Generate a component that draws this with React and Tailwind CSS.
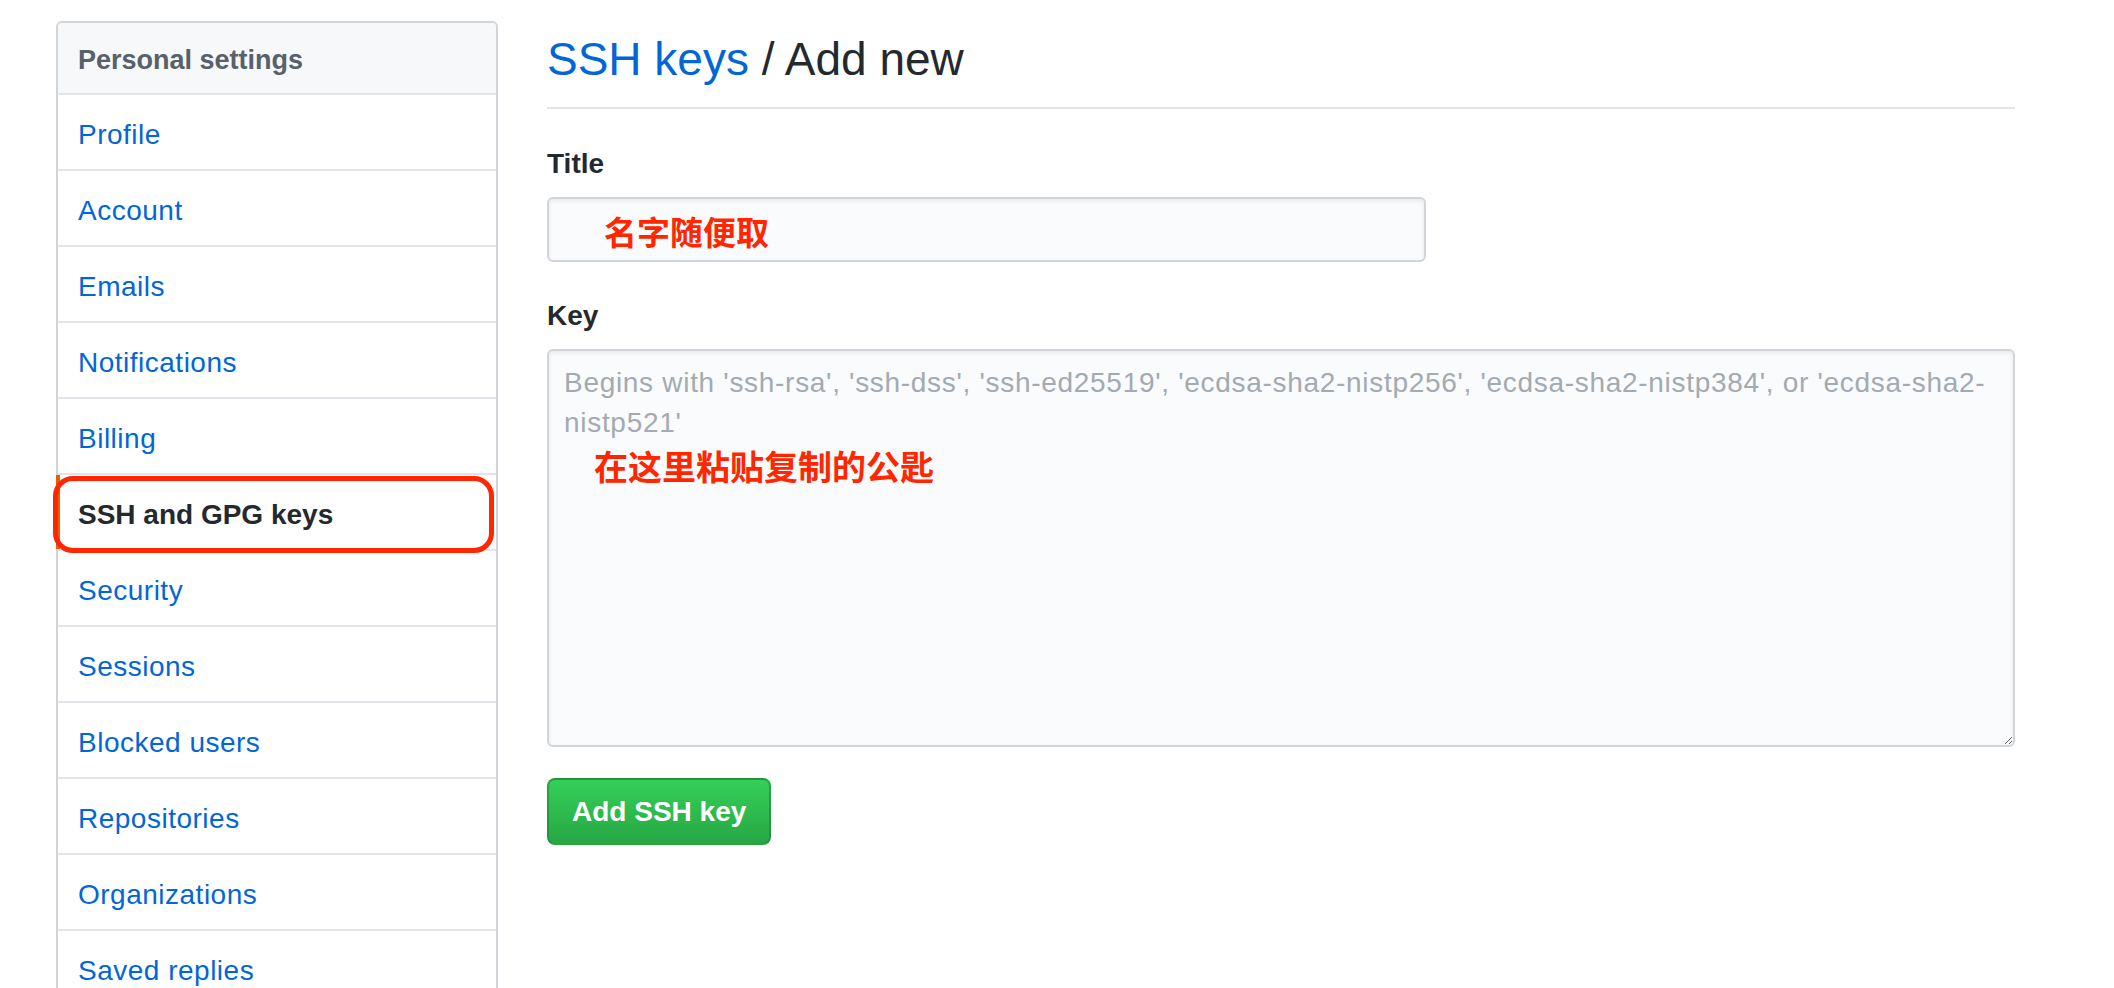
import React from 'react';

const menuItems = [
  'Profile',
  'Account',
  'Emails',
  'Notifications',
  'Billing',
  'SSH and GPG keys',
  'Security',
  'Sessions',
  'Blocked users',
  'Repositories',
  'Organizations',
  'Saved replies',
];

const Sidebar = () => (
  <nav className="w-[442px] shrink-0 self-start border-2 border-[#d1d5da] rounded-t-[6px]">
    <div className="h-[72px] leading-[70px] pt-[2px] pl-[20px] bg-[#f6f8fa] border-b-2 border-[#e1e4e8] rounded-t-[4px] text-[27px] font-bold text-[#586069]">
      Personal settings
    </div>
    {menuItems.map((item) => {
      const selected = item === 'SSH and GPG keys';
      return (
        <div
          key={item}
          className={`relative h-[76px] leading-[69px] pt-[5px] pl-[20px] text-[28px] border-b-2 border-[#e1e4e8] last:border-b-0 ${
            selected ? 'font-bold text-[#24292e]' : 'text-[#0366d6] tracking-[0.5px]'
          }`}
        >
          {selected && (
            <>
              <span className="absolute left-[-2px] top-0 bottom-0 w-[4px] bg-[#e36209]" />
              {/* red annotation around the current item */}
              <span className="absolute left-[-5px] right-[2px] top-[1px] bottom-[-4px] border-[5px] border-[#ff2600] rounded-[20px]" />
            </>
          )}
          <span className="relative">{item}</span>
        </div>
      );
    })}
  </nav>
);

export default function App() {
  return (
    <div className="min-h-screen bg-white font-['Liberation_Sans','Noto_Sans_CJK_SC',sans-serif]">
      <div className="flex gap-[49px] pl-[56px] pr-[99px] pt-[21px]">
        <Sidebar />

        <main className="flex-1 pt-[8px]">
          <h2 className="h-[80px] leading-[60px] pb-[18px] border-b-2 border-[#e1e4e8] text-[46px] font-normal text-[#24292e]">
            <span className="text-[#0366d6]">SSH keys</span> / Add new
          </h2>

          <div className="mt-[35px]">
            <label className="block h-[40px] leading-[40px] text-[28px] font-bold text-[#24292e]">Title</label>
            <div className="mt-[13px] w-[879px] h-[65px] flex items-center pl-[55px] bg-[#fafbfc] border-2 border-[#d1d5da] rounded-[6px] shadow-[inset_0_2px_4px_rgba(27,31,35,0.08)]">
              <span className="text-[33px] leading-none font-bold text-[#ff2600] font-['Noto_Sans_CJK_SC',sans-serif] pt-[4px]">
                名字随便取
              </span>
            </div>
          </div>

          <div className="mt-[34px]">
            <label className="block h-[40px] leading-[40px] text-[28px] font-bold text-[#24292e]">Key</label>
            <div className="relative mt-[13px]">
              <textarea
                className="block w-full h-[398px] px-[15px] pt-[12px] text-[28px] leading-[40px] tracking-[0.7px] text-[#24292e] placeholder:text-[#a3aab1] bg-[#fafbfc] border-2 border-[#d1d5da] rounded-[6px] shadow-[inset_0_2px_4px_rgba(27,31,35,0.08)] outline-none"
                placeholder="Begins with 'ssh-rsa', 'ssh-dss', 'ssh-ed25519', 'ecdsa-sha2-nistp256', 'ecdsa-sha2-nistp384', or 'ecdsa-sha2-nistp521'"
              />
              <span className="absolute left-[47px] top-[100px] text-[34px] leading-none font-bold text-[#ff2600] font-['Noto_Sans_CJK_SC',sans-serif] pointer-events-none">
                在这里粘贴复制的公匙
              </span>
            </div>
          </div>

          <button className="mt-[31px] h-[67px] px-[23px] text-[28px] font-bold text-white rounded-[8px] border-2 border-[#22863a]/60 bg-gradient-to-b from-[#34d058] to-[#28a745]">
            Add SSH key
          </button>
        </main>
      </div>
    </div>
  );
}
